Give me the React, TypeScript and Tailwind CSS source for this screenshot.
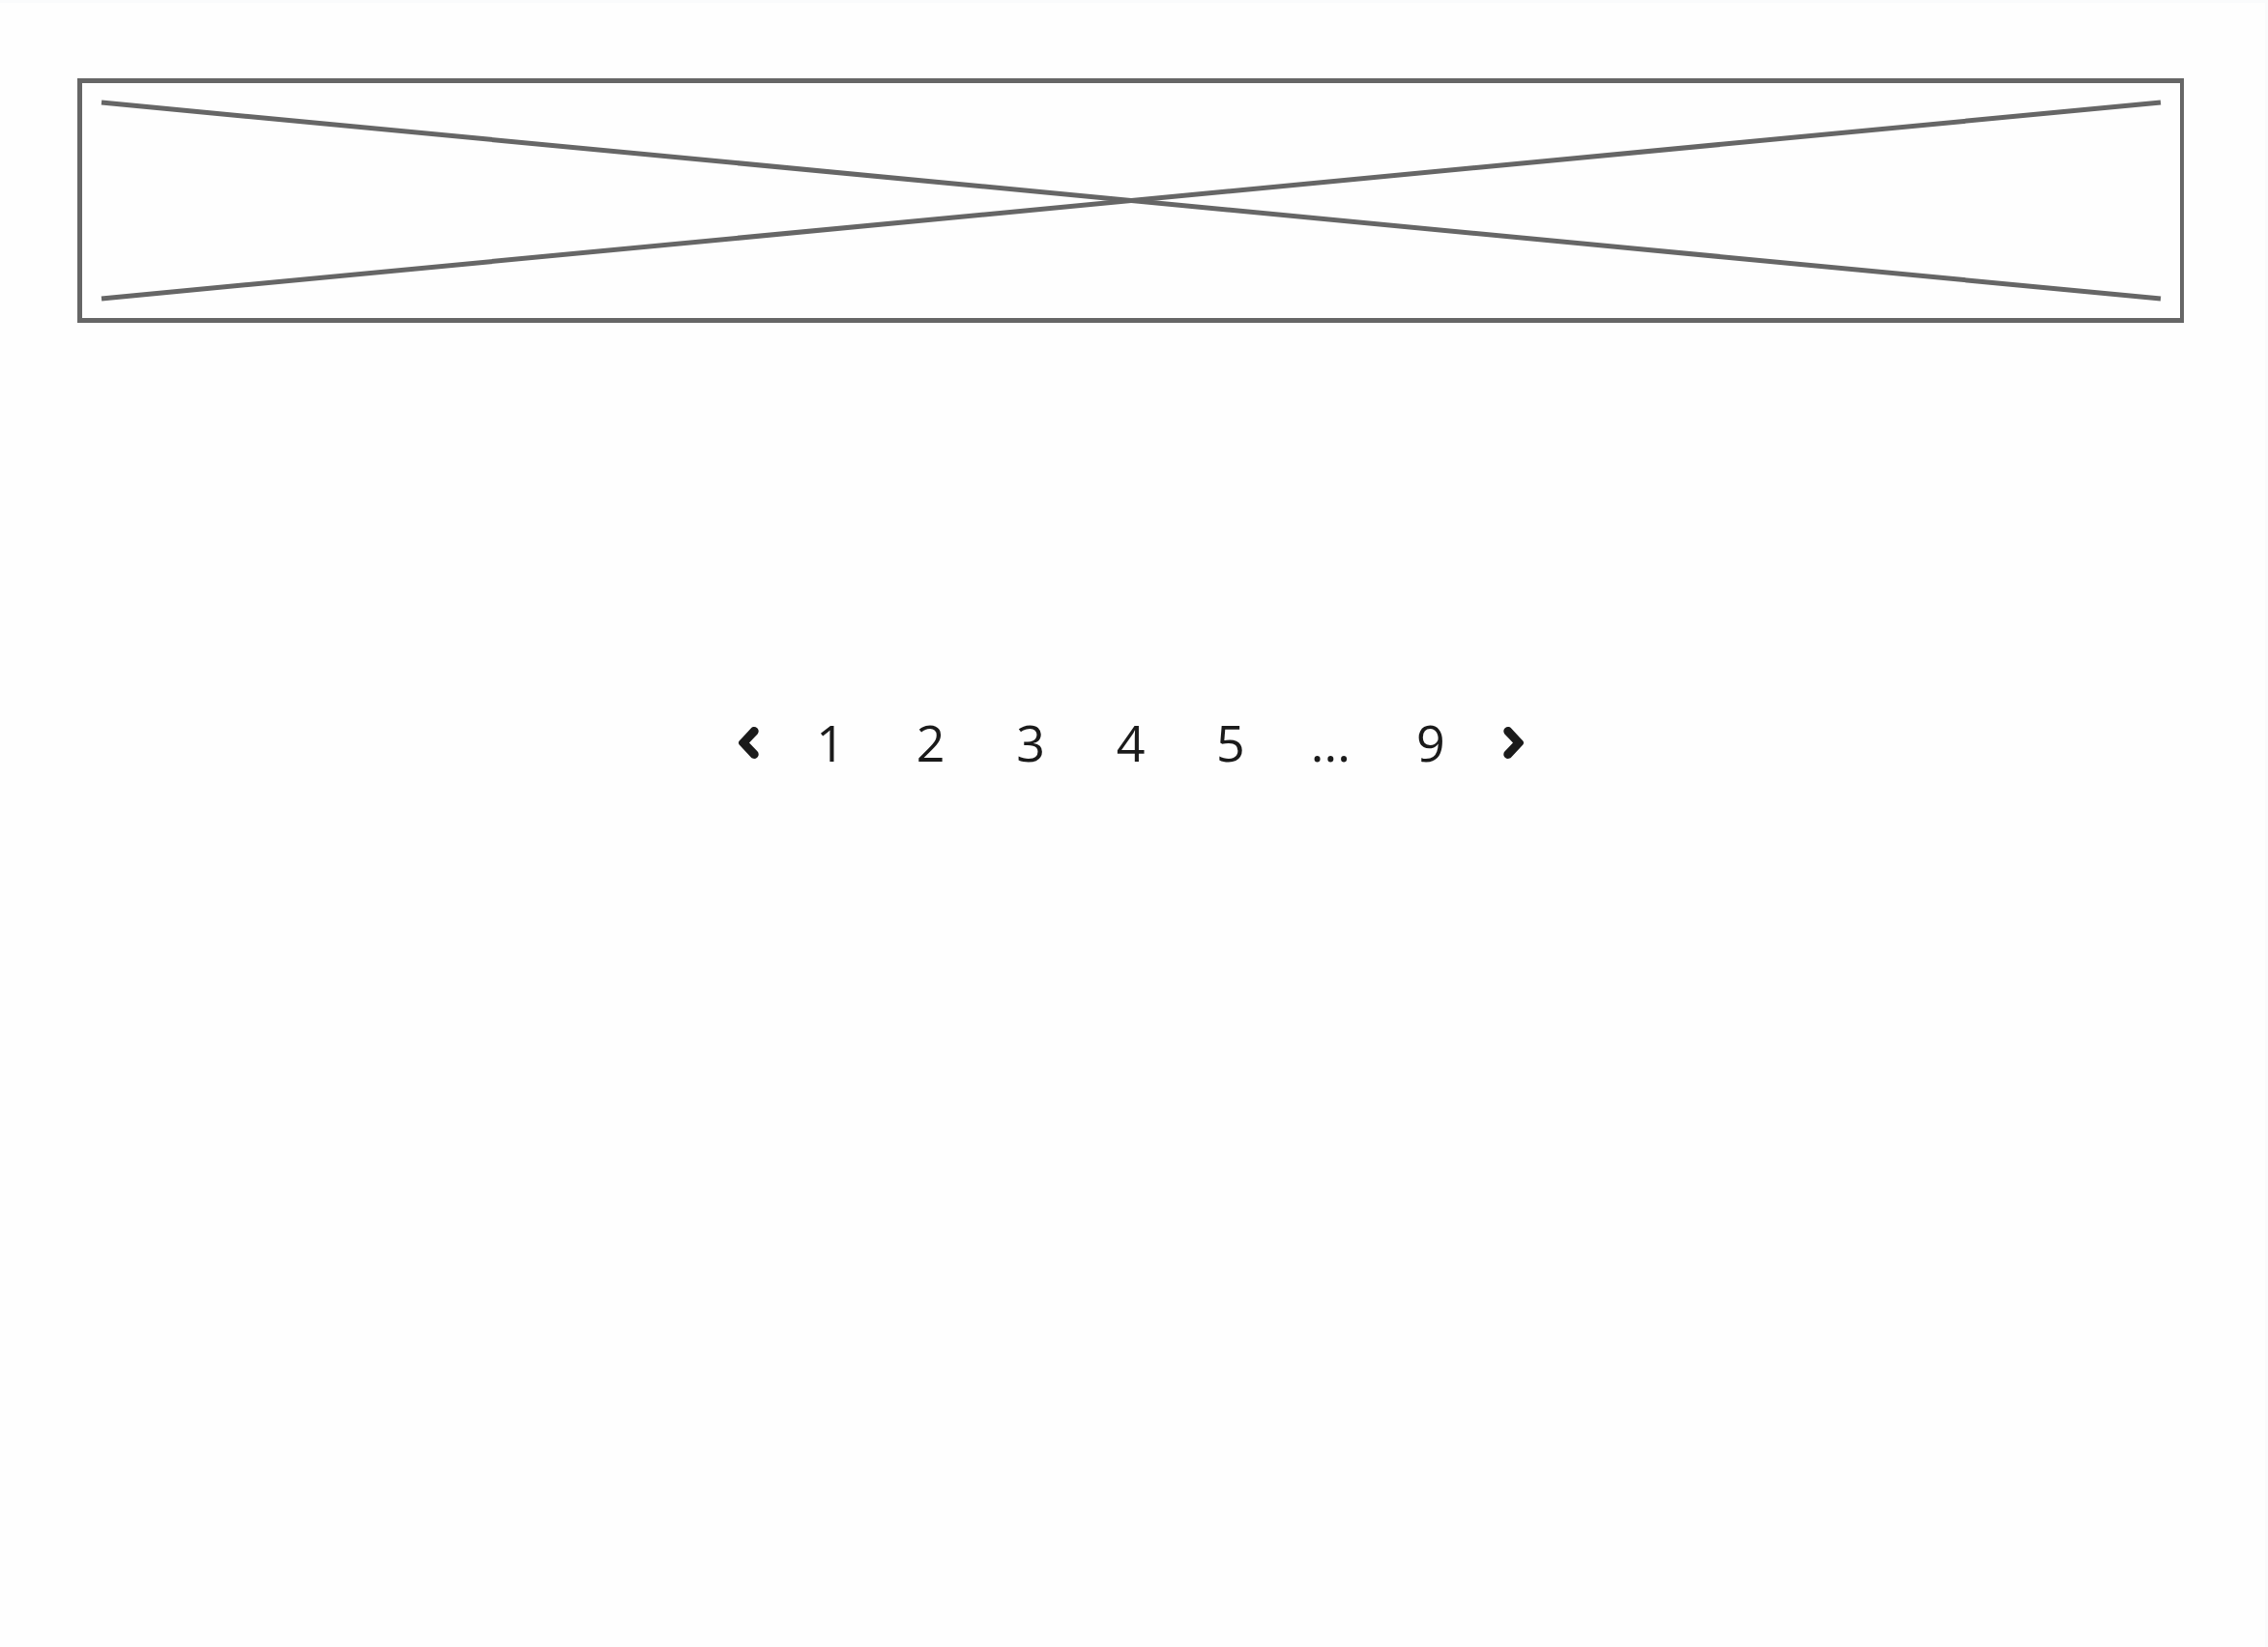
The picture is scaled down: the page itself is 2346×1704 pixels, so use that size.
const pages = ['1', '2', '3', '4', '5', '...', '9'];

function Chevron({ direction }: { direction: 'left' | 'right' }) {
  return (
    <svg
      viewBox="0 0 21 33"
      className="h-[33px] w-[21px]"
      fill="currentColor"
      aria-hidden="true"
    >
      <path
        d={
          direction === 'left'
            ? 'M.7 14.6 12.8 1.5C14.6-.4 17.4-.4 19.2 1.3 21 3 21.2 5.6 19.6 7.4L11 16.5 19.6 25.6C21.2 27.4 21 30 19.2 31.7 17.4 33.4 14.6 33.4 12.8 31.5L.7 18.4C-.3 17.2-.3 15.8.7 14.6Z'
            : 'M20.3 14.6 8.2 1.5C6.4-.4 3.6-.4 1.8 1.3 0 3-.2 5.6 1.4 7.4L10 16.5 1.4 25.6C-.2 27.4 0 30 1.8 31.7 3.6 33.4 6.4 33.4 8.2 31.5L20.3 18.4C21.3 17.2 21.3 15.8 20.3 14.6Z'
        }
      />
    </svg>
  );
}

function Pagination() {
  return (
    <nav aria-label="Pagination" className="flex items-center justify-center font-['Open_Sans','Noto_Sans',sans-serif] text-[52px] leading-[72px] text-[#1a1a1a]">
      <button type="button" aria-label="Previous page" className="flex h-[72px] items-center">
        <Chevron direction="left" />
      </button>
      <ul className="mx-[23px] grid w-[724px] grid-cols-7">
        {pages.map((page) => (
          <li key={page} className="text-center">
            {page === '...' ? <span>{page}</span> : <button type="button">{page}</button>}
          </li>
        ))}
      </ul>
      <button type="button" aria-label="Next page" className="flex h-[72px] items-center">
        <Chevron direction="right" />
      </button>
    </nav>
  );
}

export default function App() {
  return (
    <div className="min-h-screen border-t-[3px] border-r-[3px] border-[#fafbfc] bg-[#fefefe]">
      <main className="flex flex-col gap-[398px] pt-[78px] pr-[84px] pl-20">
        <div className="h-[253px] border-[5px] border-r-4 border-[#666666] p-5">
          <svg className="block h-full w-full overflow-visible" stroke="#666666" strokeWidth="5" role="img" aria-label="Placeholder">
            <line x1="0" y1="0" x2="100%" y2="100%" />
            <line x1="0" y1="100%" x2="100%" y2="0" />
          </svg>
        </div>
        <Pagination />
      </main>
    </div>
  );
}
